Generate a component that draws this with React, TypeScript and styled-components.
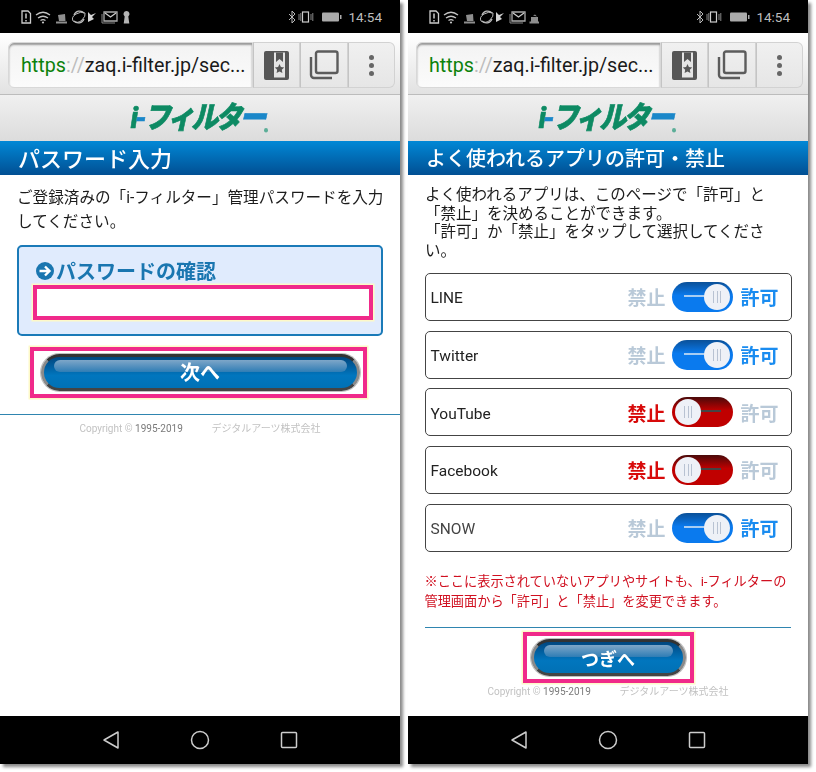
import React from "react";
import styled, { createGlobalStyle } from "styled-components";

const GlobalStyle = createGlobalStyle`
  html, body {
    margin: 0;
    padding: 0;
    background: #fff;
    font-family: Roboto, "Noto Sans CJK JP", sans-serif;
  }
  * { box-sizing: border-box; }
`;

const apps = [
  { name: "LINE", allowed: true },
  { name: "Twitter", allowed: true },
  { name: "YouTube", allowed: false },
  { name: "Facebook", allowed: false },
  { name: "SNOW", allowed: true },
];

const StatusIcons: React.FC<{ last: "key" | "cup" }> = ({ last }) => (
  <svg width="110" height="14" viewBox="0 0 110 14" fill="none">
    <path d="M1 1h6l2.500 2.500V13H1z" stroke="#ccc" strokeWidth="1.300" />
    <path d="M5 3.500v5M5 10v1.500" stroke="#ccc" strokeWidth="1.500" />
    <path d="M15 5q7-5.500 14 0M17 8q5-3.500 10 0M19.500 10.500q2.500-1.800 5 0" stroke="#c4c4c4" strokeWidth="1.300" />
    <circle cx="22" cy="12.500" r="1.100" fill="#c4c4c4" />
    <path d="M37 5l7-1 .5 7H38zM35 11.500h11v2H35z" fill="#8e8e8e" />
    <path d="M53 5a6 6 0 0 1 10-2M63 9a6 6 0 0 1-10 2" stroke="#bbb" strokeWidth="1.300" />
    <path d="M52 11q-2-4 3-7t9-1q1 3-3 7t-9 1z" stroke="#bbb" strokeWidth="1" />
    <path d="M67 2v10l6-3-2-2 4-4-5 2z" fill="#d4d4d4" />
    <path d="M83 2h13v9H83z" stroke="#aaa" strokeWidth="1.300" />
    <path d="M84 3l5.500 4L95 3" stroke="#ccc" strokeWidth="1.300" />
    <path d="M81 4v9h13" stroke="#888" />
    {last === "key" ? (
      <path d="M105.500 1a3 3 0 0 1 1.800 5.400l1 7.100h-5.600l1-7.100A3 3 0 0 1 105.500 1z" fill="#b4b4b4" />
    ) : (
      <path d="M102 7h7v4.500h-7zM100.500 11.500h10V13.500h-10zM104 5.500l2-1 2 2z" fill="#8e8e8e" />
    )}
  </svg>
);

const SystemIcons: React.FC = () => (
  <svg width="57" height="14" viewBox="0 0 57 14" fill="none">
    <path d="M1 4l6 6-3 3V1l3 3-6 6" stroke="#bbb" strokeWidth="1" />
    <rect x="14.500" y="2" width="6" height="10" stroke="#ccc" strokeWidth="1.200" />
    <path d="M11 4v6M12.800 3v8M23 4v6M24.800 3v8" stroke="#aaa" strokeWidth=".8" />
    <rect x="34" y="2.500" width="17" height="9" rx="1" fill="#aaa" />
    <rect x="52" y="5" width="1.500" height="4" fill="#aaa" />
  </svg>
);

const BookmarkIcon: React.FC = () => (
  <svg width="25" height="29" viewBox="0 0 25 29">
    <rect width="25" height="29" rx="2" fill="#565656" />
    <path fill="#e4e4e4" d="M10 1.500h11v25H10z" />
    <path fill="#565656" d="M12 1.500h7v9.500l-3.500-3-3.500 3z" />
    <path fill="#565656" d="M15.500 13l1.400 3.100 3.300.4-2.400 2.200.6 3.300-2.900-1.600-2.900 1.600.6-3.300-2.400-2.200 3.300-.4z" />
  </svg>
);

const CopyIcon: React.FC = () => (
  <svg width="30" height="30" viewBox="0 0 30 30" fill="none" stroke="#5c5c5c" strokeWidth="2.400">
    <rect x="7" y="1.500" width="21.500" height="21.500" rx="2" />
    <path d="M2 7v18a3 3 0 0 0 3 3h18" />
  </svg>
);

const ArrowBadge: React.FC = () => (
  <svg width="18" height="18" viewBox="0 0 18 18">
    <circle cx="9" cy="9" r="9" fill="#1a76b0" />
    <path d="M3.500 9h10M9 4.500L13.500 9 9 13.500" fill="none" stroke="#fff" strokeWidth="2.400" />
  </svg>
);

const NavIcons: React.FC = () => (
  <>
    <svg width="18" height="20" viewBox="0 0 18 20" fill="none" stroke="#ccc" strokeWidth="1.500">
      <path d="M16 2v16L2 10z" strokeLinejoin="round" />
    </svg>
    <svg width="20" height="20" viewBox="0 0 20 20" fill="none" stroke="#ccc" strokeWidth="1.500">
      <circle cx="10" cy="10" r="8.500" />
    </svg>
    <svg width="18" height="18" viewBox="0 0 18 18" fill="none" stroke="#ccc" strokeWidth="1.500">
      <rect x="1.500" y="1.500" width="15" height="15" rx="1" />
    </svg>
  </>
);

const Chrome: React.FC<{
  title: string;
  titleSize: number;
  last: "key" | "cup";
  children: React.ReactNode;
}> = ({ title, titleSize, last, children }) => (
  <Phone>
    <StatusBar>
      <StatusIcons last={last} />
      <StatusRight>
        <SystemIcons />
        <Clock>14:54</Clock>
      </StatusRight>
    </StatusBar>
    <Toolbar>
      <UrlBox>
        <UrlScheme>https</UrlScheme>
        <UrlSlashes>://</UrlSlashes>
        zaq.i-filter.jp/sec...
      </UrlBox>
      <ToolButton $width={47}>
        <BookmarkIcon />
      </ToolButton>
      <ToolButton $width={48}>
        <CopyIcon />
      </ToolButton>
      <ToolButton $width={47} $last>
        <Dots>
          <i />
          <i />
          <i />
        </Dots>
      </ToolButton>
    </Toolbar>
    <LogoBand>
      <Logo>
        i<LogoDash>-</LogoDash>フィルタ<LogoDash>ー</LogoDash>
        <LogoDot />
      </Logo>
    </LogoBand>
    <TitleBar $size={titleSize}>{title}</TitleBar>
    <Body>{children}</Body>
    <NavBar>
      <NavIcons />
    </NavBar>
  </Phone>
);

const Copyright: React.FC = () => (
  <CopyLine>
    <span>
      Copyright © <b>1995-2019</b>
    </span>
    <span>デジタルアーツ株式会社</span>
  </CopyLine>
);

const App: React.FC = () => (
  <Page>
    <GlobalStyle />
    <Chrome title="パスワード入力" titleSize={22} last="key">
      <LeadLeft>
        ご登録済みの「i-フィルター」管理パスワードを入力
        <br />
        してください。
      </LeadLeft>
      <PasswordPanel>
        <PanelTitle>
          <ArrowBadge />
          パスワードの確認
        </PanelTitle>
        <PasswordInput />
      </PasswordPanel>
      <Highlight $width={337} $top={11} $shift={-2}>
        <GelButton $width={319} $size={20} $shift={2} $textTop={-1}>
          <span>次へ</span>
        </GelButton>
      </Highlight>
      <Rule $inset={0} $top={16} />
      <Copyright />
    </Chrome>
    <Chrome title="よく使われるアプリの許可・禁止" titleSize={20} last="cup">
      <LeadRight>
        よく使われるアプリは、このページで「許可」と「禁止」を決めることができます。
        <br />
        「許可」か「禁止」をタップして選択してください。
      </LeadRight>
      <AppList>
        {apps.map((app) => (
          <AppRow key={app.name}>
            <AppName $muted={app.name === "SNOW"}>{app.name}</AppName>
            <Deny $on={!app.allowed}>禁止</Deny>
            <Toggle $on={app.allowed}>
              <ToggleLine $on={app.allowed} />
              <Knob $on={app.allowed}>
                <Grip />
              </Knob>
            </Toggle>
            <Allow $on={app.allowed}>許可</Allow>
          </AppRow>
        ))}
      </AppList>
      <Note>
        ※ここに表示されていないアプリやサイトも、i-フィルターの管理画面から「許可」と「禁止」を変更できます。
      </Note>
      <Rule $inset={17} $top={15} />
      <Highlight $width={171} $top={4} $shift={0}>
        <GelButton $width={155} $size={18} $shift={0} $textTop={1}>
          <span>つぎへ</span>
        </GelButton>
      </Highlight>
      <CopyOffset>
        <Copyright />
      </CopyOffset>
    </Chrome>
  </Page>
);

export default App;

const Page = styled.div`
  width: 816px;
  height: 772px;
  display: flex;
  gap: 8px;
  align-items: flex-start;
  background: #fff;
  overflow: hidden;
`;

const Phone = styled.div`
  width: 400px;
  height: 764px;
  display: flex;
  flex-direction: column;
  background: #fff;
  box-shadow: 3px 3px 3px #8a8a8a;
  filter: blur(0.35px);
`;

const StatusBar = styled.div`
  height: 33px;
  flex: none;
  background: #000;
  display: flex;
  align-items: center;
  justify-content: space-between;
  padding: 1px 18px 0 21px;
`;

const StatusRight = styled.div`
  display: flex;
  align-items: center;
  gap: 3px;
`;

const Clock = styled.span`
  font-size: 13.500px;
  color: #bdbdbd;
`;

const Toolbar = styled.div`
  height: 62px;
  flex: none;
  display: flex;
  align-items: stretch;
  padding: 9px 5px 6px 8px;
  background: linear-gradient(#fff, #e2e2e2);
  border-bottom: 1px solid #bcbcbc;
`;

const UrlBox = styled.div`
  width: 245px;
  flex: none;
  display: flex;
  align-items: center;
  padding-left: 12px;
  font-size: 19.700px;
  color: #1a1a1a;
  white-space: nowrap;
  border-radius: 6px 0 0 6px;
  background: linear-gradient(#f3f3f3, #fbfbfb);
  box-shadow: inset 0 2px 2px #999;
  border: 1px solid #d8d8d8;
`;

const UrlScheme = styled.span`
  color: #0c820c;
`;

const UrlSlashes = styled.span`
  color: #bdbdbd;
`;

const ToolButton = styled.div<{ $width: number; $last?: boolean }>`
  width: ${(p) => p.$width}px;
  flex: none;
  display: flex;
  align-items: center;
  justify-content: center;
  border: 1px solid #d2d2d2;
  border-left-color: #c4c4c4;
  border-radius: ${(p) => (p.$last ? "0 6px 6px 0" : "0")};
  background: linear-gradient(#f0f0f0, #e6e6e6);
`;

const Dots = styled.div`
  display: flex;
  flex-direction: column;
  gap: 3px;
  i {
    display: block;
    width: 5px;
    height: 5px;
    border-radius: 50%;
    background: #666;
  }
`;

const LogoBand = styled.div`
  height: 46px;
  flex: none;
  display: flex;
  align-items: center;
  justify-content: center;
  background: linear-gradient(#f0f0f0, #dcdcdc);
`;

const Logo = styled.div`
  position: relative;
  font-size: 27px;
  line-height: 30px;
  font-weight: 900;
  font-style: italic;
  letter-spacing: -3px;
  color: #0d8a63;
  margin: 0 6px 0 0;
  white-space: nowrap;
  transform: scaleY(1.120);
  -webkit-text-stroke: 0.6px currentColor;
`;

const LogoDash = styled.span`
  color: #1a87c9;
`;

const LogoDot = styled.i`
  position: absolute;
  right: -5px;
  bottom: 2px;
  width: 4px;
  height: 4px;
  border-radius: 50%;
  background: #5cae98;
`;

const TitleBar = styled.div<{ $size: number }>`
  height: 34px;
  flex: none;
  display: flex;
  align-items: center;
  padding: 0 0 2px 18px;
  font-size: ${(p) => p.$size}px;
  font-weight: 500;
  color: #fff;
  background: linear-gradient(#0188d6, #014f93);
`;

const Body = styled.div`
  flex: 1;
  min-height: 0;
  display: flex;
  flex-direction: column;
  align-items: center;
`;

const LeadLeft = styled.p`
  width: 366px;
  margin: 11px 0 0;
  font-size: 15.600px;
  line-height: 24px;
  color: #1c1c1c;
  white-space: nowrap;
`;

const LeadRight = styled.p`
  width: 366px;
  margin: 11px 0 0;
  font-size: 15.500px;
  line-height: 18.700px;
  color: #1c1c1c;
`;

const PasswordPanel = styled.div`
  width: 366px;
  height: 91px;
  margin-top: 11px;
  padding: 11px 9px 0 14px;
  background: #e0ebfd;
  border: 2px solid #1a7ab8;
  border-radius: 5px;
  display: flex;
  flex-direction: column;
`;

const PanelTitle = styled.div`
  display: flex;
  align-items: center;
  gap: 2px;
  height: 25px;
  padding-left: 3px;
  font-size: 20px;
  font-weight: 700;
  color: #1a76b0;
`;

const PasswordInput = styled.div`
  height: 35px;
  width: 340px;
  margin-top: 2px;
  background: #fff;
  border: 4px solid #f02a8a;
  box-shadow: 0 0 0 1.500px #fdf9c8;
`;

const Highlight = styled.div<{ $width: number; $top: number; $shift: number }>`
  width: ${(p) => p.$width}px;
  height: 51px;
  margin-top: ${(p) => p.$top}px;
  transform: translateX(${(p) => p.$shift}px);
  flex: none;
  display: flex;
  align-items: center;
  justify-content: center;
  border: 4px solid #f02a8a;
  box-shadow: 0 0 0 1.500px #fdf9c8;
`;

const GelButton = styled.div<{ $width: number; $size: number; $shift: number; $textTop: number }>`
  position: relative;
  flex: none;
  width: ${(p) => p.$width}px;
  height: 37px;
  margin-left: ${(p) => p.$shift * 2}px;
  display: flex;
  align-items: center;
  justify-content: center;
  border-radius: 19px;
  border: 3px solid;
  border-color: #333 #8a8a8a #444 #8a8a8a;
  box-shadow: 0 0 0 1px #c0c0c0;
  font-size: ${(p) => p.$size}px;
  font-weight: 700;
  color: #fff;
  background: linear-gradient(#01467f, #0176be 60%, #0171b5);
  &::before {
    content: "";
    position: absolute;
    left: 10px;
    right: 10px;
    top: 3px;
    height: 12px;
    border-radius: 6px;
    background: linear-gradient(#7ea6c8, #2f7db5);
  }
  span {
    position: relative;
    top: ${(p) => p.$textTop}px;
  }
`;

const Rule = styled.div<{ $inset: number; $top: number }>`
  align-self: stretch;
  height: 1px;
  flex: none;
  margin: ${(p) => p.$top}px ${(p) => p.$inset}px 0;
  background: #2f85b0;
`;

const CopyLine = styled.div`
  margin-top: 7px;
  width: 241px;
  display: flex;
  justify-content: space-between;
  font-size: 10px;
  line-height: 13px;
  color: #c2c2c2;
  b {
    font-weight: 400;
    color: #7a7a7a;
  }
`;

const CopyOffset = styled.div`
  margin-top: -5px;
`;

const AppList = styled.div`
  width: 367px;
  margin-top: 12px;
  display: flex;
  flex-direction: column;
  gap: 9.700px;
`;

const AppRow = styled.div`
  height: 48px;
  display: flex;
  align-items: center;
  padding: 0 12px 0 5px;
  border: 1px solid #444;
  border-radius: 5px;
`;

const AppName = styled.span<{ $muted?: boolean }>`
  flex: 1;
  padding-top: 3px;
  font-size: 15.500px;
  color: ${(p) => (p.$muted ? "#444" : "#222")};
`;

const Deny = styled.span<{ $on: boolean }>`
  font-size: 19px;
  font-weight: 700;
  color: ${(p) => (p.$on ? "#d80a0a" : "#b9c9d8")};
`;

const Allow = styled.span<{ $on: boolean }>`
  font-size: 19px;
  font-weight: 700;
  color: ${(p) => (p.$on ? "#1a8cf0" : "#b9c9d8")};
`;

const Toggle = styled.div<{ $on: boolean }>`
  position: relative;
  width: 61px;
  height: 30px;
  margin: 0 7px;
  flex: none;
  border-radius: 15px;
  background: ${(p) =>
    p.$on ? "linear-gradient(#0a5098, #0a7aee 45%)" : "linear-gradient(#4a0a0a, #c00000 45%)"};
`;

const ToggleLine = styled.i<{ $on: boolean }>`
  position: absolute;
  top: 13px;
  height: 2px;
  width: 22px;
  ${(p) => (p.$on ? "left: 12px;" : "right: 12px;")}
  background: ${(p) => (p.$on ? "#a8cdf2" : "#444")};
`;

const Knob = styled.div<{ $on: boolean }>`
  position: absolute;
  top: 2px;
  ${(p) => (p.$on ? "right: 3px;" : "left: 3px;")}
  width: 26px;
  height: 26px;
  border-radius: 50%;
  background: #eef1f7;
  display: flex;
  align-items: center;
  justify-content: center;
`;

const Grip = styled.i`
  width: 8px;
  height: 12px;
  border-left: 1px solid #b8c2d2;
  border-right: 1px solid #b8c2d2;
  background: linear-gradient(#b8c2d2, #b8c2d2) center / 1px 100% no-repeat;
`;

const Note = styled.p`
  width: 367px;
  margin: 20px 0 0;
  font-size: 13.200px;
  line-height: 20px;
  color: #d01020;
`;

const NavBar = styled.div`
  height: 48px;
  flex: none;
  display: flex;
  align-items: center;
  padding-left: 102px;
  gap: 70px;
  background: #000;
`;
